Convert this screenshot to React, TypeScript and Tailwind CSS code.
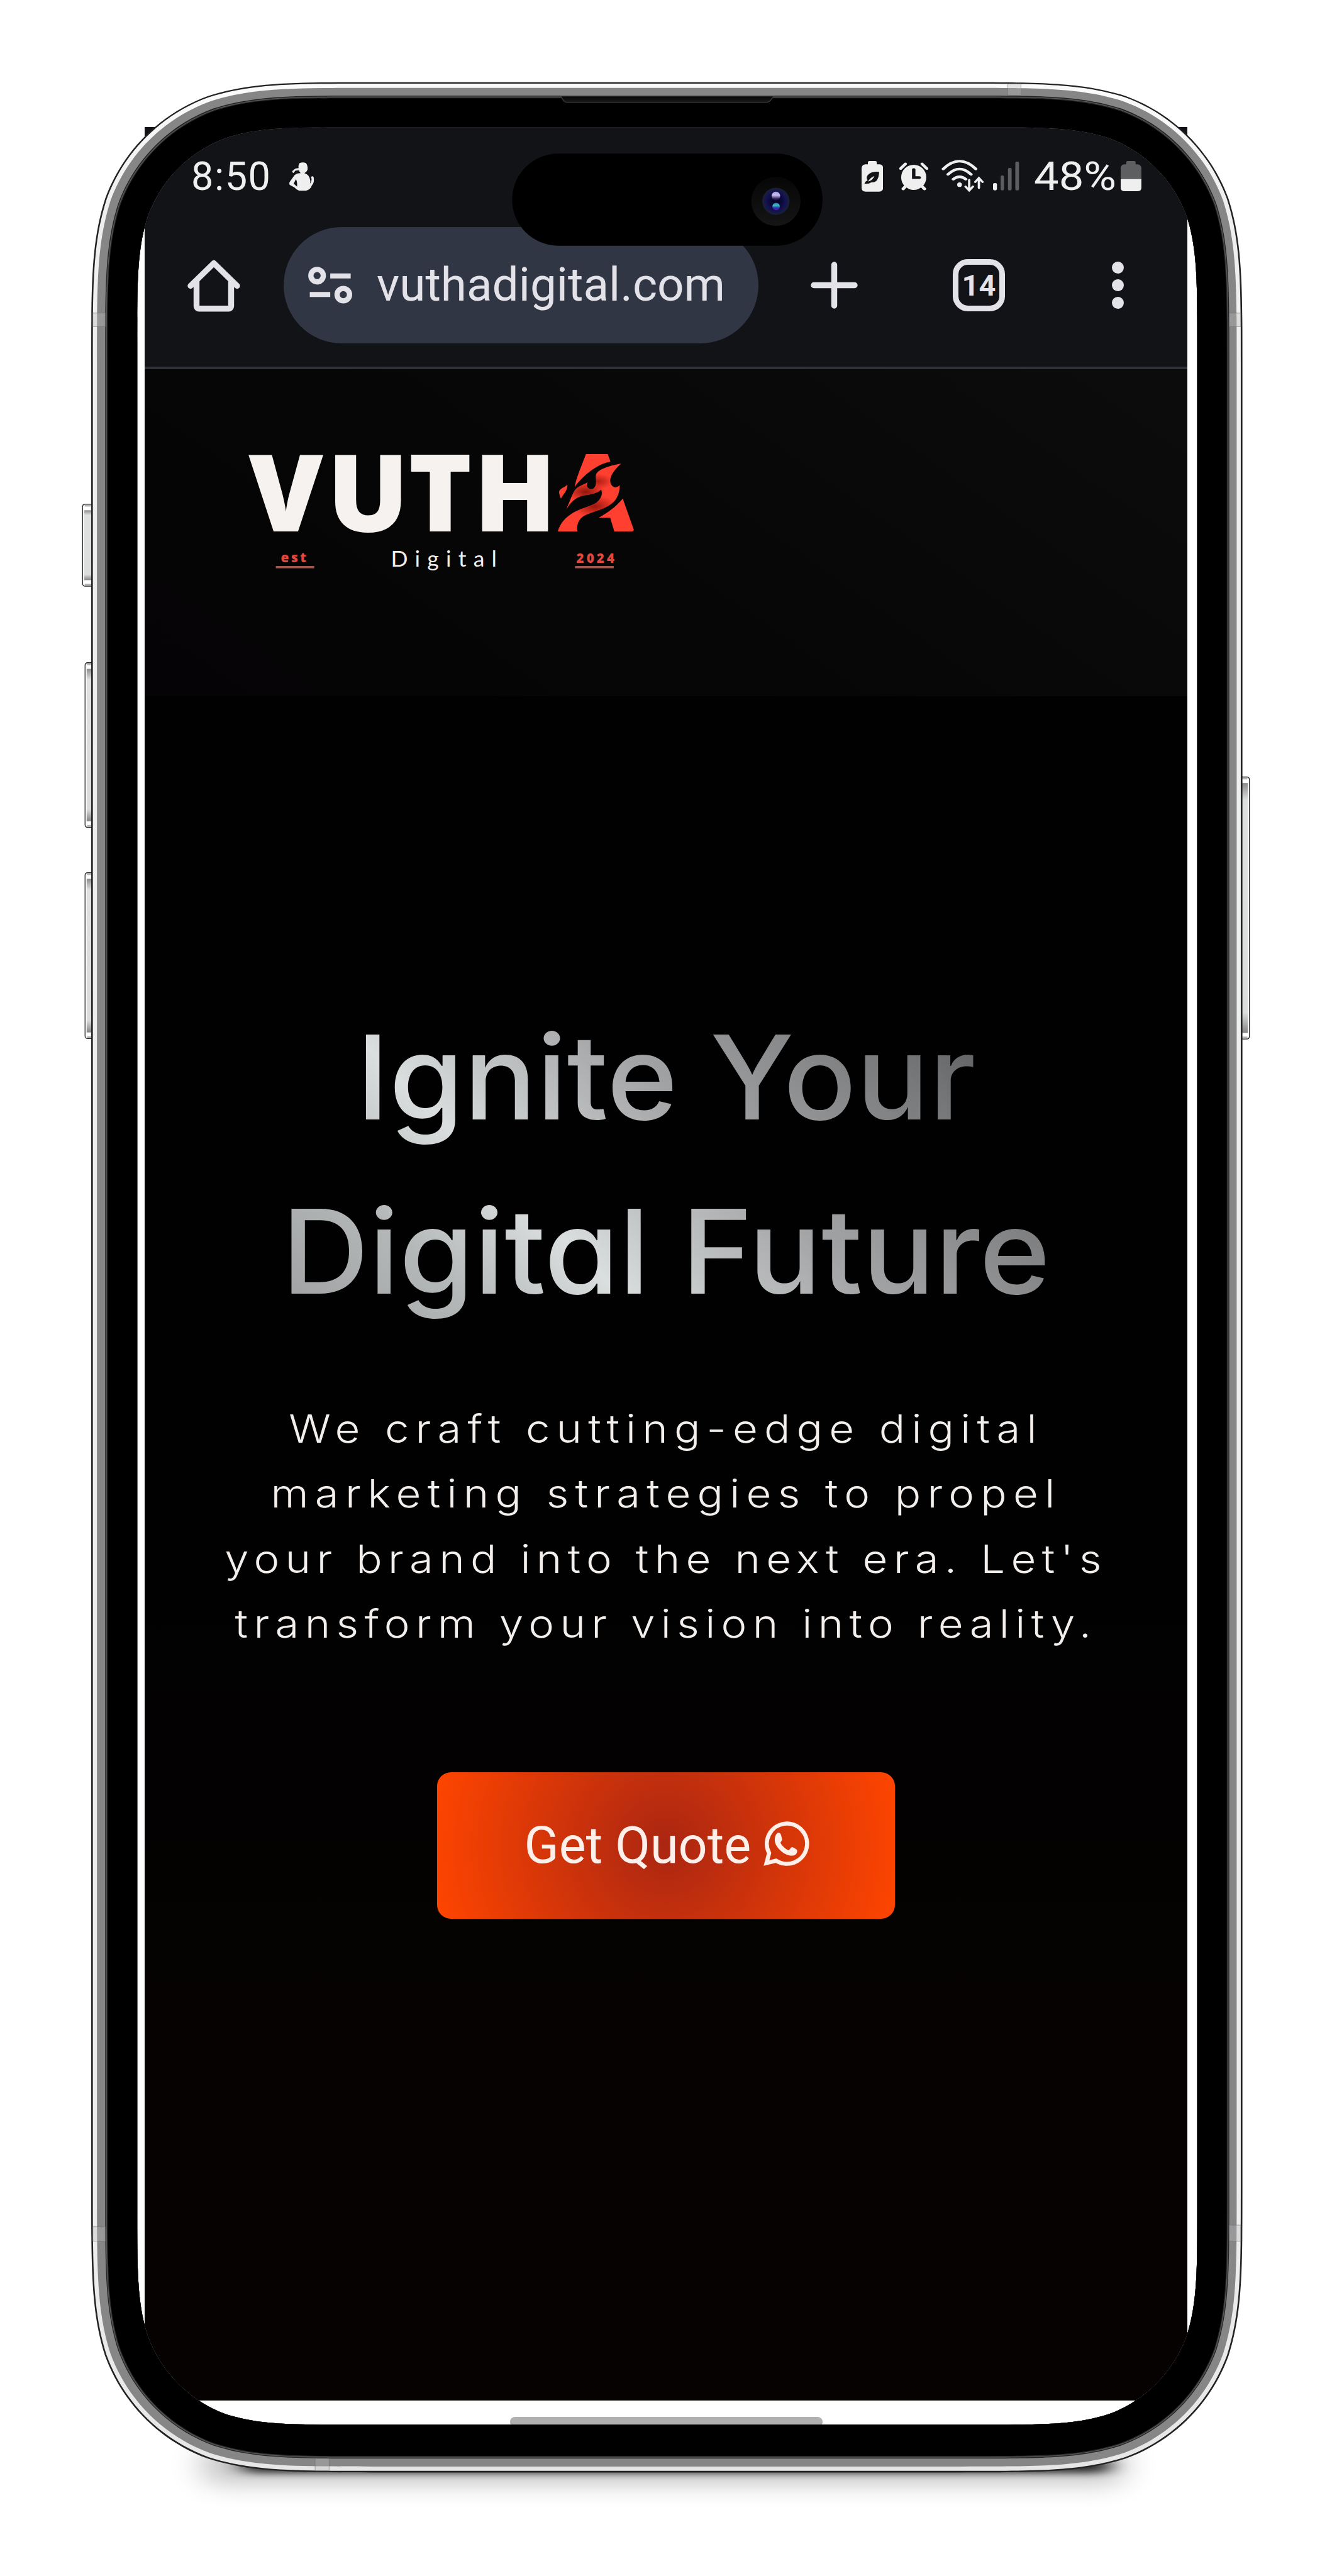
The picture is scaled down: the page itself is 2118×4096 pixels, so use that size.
import type { ReactNode } from "react";

/* Rounded rectangle with continuous-curvature corners. */
function squircle(x0: number, y0: number, x1: number, y1: number, r: number) {
  const a = 1.528665 * r;
  const b = 1.08849296 * r;
  const c = 0.86840694 * r;
  const d = 0.63149379 * r;
  const e = 0.37282383 * r;
  const f = 0.16905956 * r;
  const g = 0.07491139 * r;
  return [
    `M${x0 + a} ${y0}H${x1 - a}`,
    `C${x1 - b} ${y0} ${x1 - c} ${y0} ${x1 - d} ${y0 + g}`,
    `C${x1 - e} ${y0 + f} ${x1 - f} ${y0 + e} ${x1 - g} ${y0 + d}`,
    `C${x1} ${y0 + c} ${x1} ${y0 + b} ${x1} ${y0 + a}`,
    `V${y1 - a}`,
    `C${x1} ${y1 - b} ${x1} ${y1 - c} ${x1 - g} ${y1 - d}`,
    `C${x1 - f} ${y1 - e} ${x1 - e} ${y1 - f} ${x1 - d} ${y1 - g}`,
    `C${x1 - c} ${y1} ${x1 - b} ${y1} ${x1 - a} ${y1}`,
    `H${x0 + a}`,
    `C${x0 + b} ${y1} ${x0 + c} ${y1} ${x0 + d} ${y1 - g}`,
    `C${x0 + e} ${y1 - f} ${x0 + f} ${y1 - e} ${x0 + g} ${y1 - d}`,
    `C${x0} ${y1 - c} ${x0} ${y1 - b} ${x0} ${y1 - a}`,
    `V${y0 + a}`,
    `C${x0} ${y0 + b} ${x0} ${y0 + c} ${x0 + g} ${y0 + d}`,
    `C${x0 + f} ${y0 + e} ${x0 + e} ${y0 + f} ${x0 + d} ${y0 + g}`,
    `C${x0 + c} ${y0} ${x0 + b} ${y0} ${x0 + a} ${y0}Z`,
  ].join("");
}

const SCREEN = squircle(334, 310, 2914, 5902, 342);

const LAYERS = [
  { d: squircle(222, 200, 3024, 6018, 450), fill: "#222324" },
  { d: squircle(226, 203.5, 3020, 6014, 446), fill: "url(#rim)" },
  { d: squircle(236, 214, 3010, 6003.5, 436), fill: "#868686" },
  { d: squircle(256, 232.5, 2992, 5984, 418), fill: "#222324" },
  { d: squircle(258, 235, 2990, 5982, 416), fill: "#58595b" },
  { d: squircle(260, 237, 2988, 5980, 414), fill: "#2b2b2d" },
  { d: squircle(262, 239, 2986, 5978, 412), fill: "#000" },
];

function SideButton({ x, y, w, h, right }: { x: number; y: number; w: number; h: number; right?: boolean }) {
  return (
    <g>
      <rect x={right ? x - 10 : x} y={y} width={w + 10} height={h} rx={7} fill="#262627" />
      <rect x={right ? x - 10 : x + 2} y={y + 2} width={w + 8} height={h - 4} rx={6} fill="#fff" />
      <rect x={right ? x - 10 : x + 6} y={y + 2} width={w + 4} height={5} fill="#777" opacity={0.55} />
      <rect x={right ? x - 10 : x + 6} y={y + h - 7} width={w + 4} height={5} fill="#777" opacity={0.55} />
      <rect x={right ? x - 10 : x + 5} y={y + 16} width={w + 5} height={h - 32} fill="url(#key)" />
    </g>
  );
}

function PhoneFrame() {
  return (
    <svg className="pointer-events-none absolute inset-0 h-full w-full" viewBox="0 0 3242 6270" preserveAspectRatio="none" aria-hidden="true">
      <defs>
        <linearGradient id="rim" x1="0" y1="0" x2="0" y2="1">
          <stop offset="0" stopColor="#fbfbfb" />
          <stop offset="0.05" stopColor="#efefef" />
          <stop offset="0.9" stopColor="#ededed" />
          <stop offset="1" stopColor="#e6e6e6" />
        </linearGradient>
        <linearGradient id="key" x1="0" y1="0" x2="0" y2="1">
          <stop offset="0" stopColor="#8b8c8b" />
          <stop offset="0.07" stopColor="#dfe1e0" />
          <stop offset="0.92" stopColor="#dbdddc" />
          <stop offset="1" stopColor="#858585" />
        </linearGradient>
        <linearGradient id="slot" x1="0" y1="0" x2="0" y2="1">
          <stop offset="0" stopColor="#050505" />
          <stop offset="1" stopColor="#1a1a1a" />
        </linearGradient>
        <linearGradient id="lensRing" x1="0" y1="0" x2="0" y2="1">
          <stop offset="0" stopColor="#060606" />
          <stop offset="1" stopColor="#151515" />
        </linearGradient>
        <radialGradient id="lens">
          <stop offset="0" stopColor="#04041c" />
          <stop offset="0.45" stopColor="#0a0a3c" />
          <stop offset="0.72" stopColor="#141250" />
          <stop offset="1" stopColor="#1b2136" />
        </radialGradient>
        <linearGradient id="glint" x1="0" y1="0" x2="0" y2="1">
          <stop offset="0" stopColor="#a79be0" />
          <stop offset="0.4" stopColor="#c9bdf0" />
          <stop offset="0.85" stopColor="#2a1458" />
        </linearGradient>
        <linearGradient id="glint2" x1="0" y1="0" x2="0" y2="1">
          <stop offset="0" stopColor="#2f7fb8" />
          <stop offset="0.35" stopColor="#35bfc0" />
          <stop offset="0.7" stopColor="#2a30b0" />
          <stop offset="1" stopColor="#6a12a0" />
        </linearGradient>
        <filter id="soft" x="-20%" y="-400%" width="140%" height="900%">
          <feGaussianBlur stdDeviation="40 32" />
        </filter>
        <filter id="tight" x="-20%" y="-400%" width="140%" height="900%">
          <feGaussianBlur stdDeviation="26 9" />
        </filter>
      </defs>

      <rect x="490" y="5960" width="2250" height="80" rx="40" fill="#000" opacity="0.27" filter="url(#soft)" />
      <rect x="590" y="5985" width="2110" height="34" rx="17" fill="#000" opacity="0.78" filter="url(#tight)" />

      <SideButton x={200} y={1226} w={22} h={202} />
      <SideButton x={206} y={1612} w={16} h={403} />
      <SideButton x={206} y={2123} w={16} h={406} />
      <SideButton x={3024} y={1890} w={18} h={640} right />

      {LAYERS.map((l, i) => (
        <path key={i} d={l.d + SCREEN} fill={l.fill} fillRule="evenodd" />
      ))}

      <g fill="#b9b9b9" fillOpacity="0.35" stroke="#6f6f78" strokeOpacity="0.6" strokeWidth="1.5">
        <rect x="226" y="762" width="30" height="33" />
        <rect x="2992" y="762" width="28" height="33" />
        <rect x="226" y="5420" width="30" height="35" />
        <rect x="2992" y="5416" width="28" height="39" />
        <rect x="2453" y="204" width="32" height="28" />
        <rect x="767" y="5984" width="34" height="30" />
      </g>

      <path d="M1365 234C1370 240 1370 249 1380 249H1866C1876 249 1876 240 1884 234Z" fill="url(#slot)" stroke="#3c3c3c" strokeWidth="2" />

      <rect x="1246.500" y="374" width="755.500" height="224" rx="112" fill="#000" />
      <circle cx="1888.500" cy="490" r="60" fill="url(#lensRing)" />
      <circle cx="1888.500" cy="490" r="33" fill="url(#lens)" />
      <circle cx="1888.500" cy="477" r="10.500" fill="url(#glint)" />
      <circle cx="1889" cy="502.500" r="9" fill="url(#glint2)" />
    </svg>
  );
}

function Glyph({ box, className, children }: { box: string; className: string; children: ReactNode }) {
  return (
    <svg viewBox={box} preserveAspectRatio="none" className={className} aria-hidden="true">
      {children}
    </svg>
  );
}

function StatusBar() {
  return (
    <div className="flex h-[156px] items-center pr-[73px] pl-[74px] font-['Roboto',sans-serif] text-[#efefef]">
      <span className="text-[63px] leading-none tracking-[1.500px]">8:50</span>
      <Glyph box="816 445 100 160" className="ml-[28px] h-[53.300px] w-[41.700px]">
        <g fill="#efefef">
          <path d="M858 464Q870 457 882 464Q890 478 888 496Q884 508 876 512Q896 520 898 545Q900 556 897 562Q906 552 902 530Q906 524 911 530Q916 556 904 572Q900 590 882 596H856Q846 592 838 580L820 568Q816 560 822 550L838 522Q848 512 862 512Q856 506 856 498L842 500L834 512Q828 508 830 502L842 490L854 488Q852 472 858 464Z" />
          <path d="M844 540L835 562L848 576Q850 556 844 540Z" fill="#121316" />
        </g>
      </Glyph>

      <div className="ml-auto flex items-center">
        <Glyph box="55 445 82 160" className="h-[53.300px] w-[34.200px]">
          <path d="M79 470V460Q79 454 85 454H107Q113 454 113 460V470H124Q137 472 137 488V582Q137 600 121 600H71Q55 600 55 582V488Q57 472 68 470Z" fill="#efefef" />
          <path d="M122 506Q90 502 77 524Q72 536 78 546Q68 552 66 562Q80 566 92 556Q120 560 122 506ZM104 526Q88 532 80 552Q96 548 104 526Z" fill="#121316" fillRule="evenodd" />
        </Glyph>
        <Glyph box="198 445 110 160" className="ml-[25.400px] h-[53.300px] w-[45.800px]">
          <ellipse cx="253" cy="532" rx="48" ry="60" fill="#efefef" />
          <path d="M203 490L221 468M303 490L285 468" stroke="#efefef" strokeWidth="12" strokeLinecap="round" />
          <path d="M222 574L213 587M284 574L294 587" stroke="#efefef" strokeWidth="13" strokeLinecap="round" />
          <path d="M253 495V533H274" fill="none" stroke="#121316" strokeWidth="13" strokeLinecap="round" />
        </Glyph>
        <Glyph box="360 445 163 160" className="ml-[21.700px] h-[53.300px] w-[67.900px]">
          <g fill="none" stroke="#efefef" strokeWidth="12" strokeLinecap="round">
            <path d="M367 492Q429 418 491 492" />
            <path d="M385 518Q429 466 473 518" />
            <path d="M405 541Q429 518 453 541" />
          </g>
          <ellipse cx="429" cy="567" rx="9" ry="11" fill="#efefef" />
          <path d="M466 544V594M452 576L466 595L480 576M503 582V538M489 554L503 535L517 554" fill="none" stroke="#efefef" strokeWidth="9" strokeLinecap="round" />
        </Glyph>
        <Glyph box="557 445 100 160" className="ml-[14.200px] h-[53.300px] w-[41.700px]">
          <rect x="557" y="559" width="15" height="35" rx="7" fill="#efefef" />
          <g fill="#5c5d5f">
            <rect x="586" y="523" width="13" height="71" rx="6" />
            <rect x="614" y="487" width="14" height="107" rx="6" />
            <rect x="642" y="457" width="14" height="137" rx="6" />
          </g>
        </Glyph>
        <span className="ml-[23px] w-[128px] text-[63px] leading-none">
          <span className="inline-block origin-left scale-x-[1.12]">48%</span>
        </span>
        <Glyph box="1047 445 79 160" className="ml-[10px] h-[53.300px] w-[32.900px]">
          <path d="M1068 470V460Q1068 454 1074 454H1098Q1104 454 1104 460V470H1112Q1126 474 1126 488V541H1047V488Q1047 474 1060 470Z" fill="#5e5f61" />
          <path d="M1047 540H1126V582Q1126 598 1110 598H1063Q1047 598 1047 582Z" fill="#efefef" />
        </Glyph>
      </div>
    </div>
  );
}

function Toolbar() {
  return (
    <div className="mb-[34px] flex h-[191px] items-center pl-[68.400px] font-['Roboto',sans-serif] text-[#e3e2e8]">
      <svg viewBox="0 0 84 84" className="h-[84px] w-[84px] shrink-0" fill="none" stroke="currentColor" strokeWidth="9.400" aria-hidden="true">
        <path d="M5 42.500L42 6.500L79 42.500" strokeLinecap="round" strokeLinejoin="round" />
        <path d="M14.500 34V74.800a4 4 0 0 0 4 4H65.500a4 4 0 0 0 4-4V34" />
      </svg>
      <div className="ml-[68.600px] flex h-[184.400px] w-[755px] shrink-0 items-center rounded-full bg-[#313645] pl-[38.600px]">
        <svg viewBox="0 0 70 59" className="h-[59px] w-[70px] shrink-0" fill="none" stroke="currentColor" strokeWidth="8.400" aria-hidden="true">
          <circle cx="14.200" cy="14.300" r="9.900" />
          <circle cx="55.900" cy="44.500" r="9.900" />
          <path d="M35.100 14.800H67.600M2.600 44.300H35.100" strokeWidth="8" />
        </svg>
        <span className="ml-[39.500px] text-[74.700px] leading-none">vuthadigital.com</span>
      </div>
      <svg viewBox="0 0 75 75" className="ml-[83px] h-[75px] w-[75px] shrink-0" fill="none" stroke="currentColor" strokeWidth="9.400" strokeLinecap="round" aria-hidden="true">
        <path d="M37.500 5V70M5 37.500H70" />
      </svg>
      <div className="ml-[151px] flex h-[83px] w-[83px] shrink-0 items-center justify-center rounded-[24px] border-[9.400px] border-[#e3e2e8]">
        <span className="text-[47px] leading-none font-bold">14</span>
      </div>
      <div className="ml-[170px] flex shrink-0 flex-col gap-[8.600px]">
        <span className="h-[19px] w-[19px] rounded-full bg-[#e3e2e8]" />
        <span className="h-[19px] w-[19px] rounded-full bg-[#e3e2e8]" />
        <span className="h-[19px] w-[19px] rounded-full bg-[#e3e2e8]" />
      </div>
    </div>
  );
}

function Logo() {
  return (
    <svg viewBox="0 0 640 230" className="h-[230px] w-[640px] overflow-visible" aria-label="Vutha Digital">
      <defs>
        <radialGradient id="shade1" gradientUnits="userSpaceOnUse" cx="1305" cy="412" r="70">
          <stop offset="0" stopColor="#8f150b" />
          <stop offset="1" stopColor="#8f150b" stopOpacity="0" />
        </radialGradient>
        <radialGradient id="shade2" gradientUnits="userSpaceOnUse" cx="1338" cy="518" r="80">
          <stop offset="0" stopColor="#9a160c" />
          <stop offset="1" stopColor="#9a160c" stopOpacity="0" />
        </radialGradient>
        <radialGradient id="shade3" gradientUnits="userSpaceOnUse" cx="1350" cy="335" r="56">
          <stop offset="0" stopColor="#a81a10" stopOpacity="0.9" />
          <stop offset="1" stopColor="#a81a10" stopOpacity="0" />
        </radialGradient>
        <path
          id="flame"
          d="M1435 205C1410 212 1365 235 1350 265C1335 290 1347 320 1342 360C1338 385 1328 397 1320 390C1308 378 1308 360 1312 342C1295 360 1270 375 1262 410C1252 445 1245 490 1234 538C1250 490 1265 450 1300 437C1325 430 1345 425 1362 395C1368 430 1362 460 1345 490C1325 515 1290 530 1262 560C1235 590 1210 640 1203 700L1275 700C1272 660 1275 615 1300 585C1325 560 1370 540 1395 505C1420 475 1430 420 1430 362C1420 385 1405 385 1398 355C1388 310 1405 260 1435 205Z"
        />
      </defs>
      <text x="15.300 140.500 269.500 373.500" y="145" fill="#f5f2ef" fontSize="171" fontWeight="800" fontFamily="'Open Sans', sans-serif">
        VUTH
      </text>
      <g transform="matrix(0.4333 0 0 0.21777 -14.2 -7.5)" fill="#ff3f30">
        <path d="M1306 135H1386L1396 190C1350 205 1295 290 1265 375C1267 340 1275 300 1280 270Z" />
        <path d="M1238 358C1232 375 1212 385 1208 405C1206 425 1211 440 1214 462C1222 430 1240 400 1238 358Z" />
        <use href="#flame" />
        <use href="#flame" fill="url(#shade1)" />
        <use href="#flame" fill="url(#shade2)" />
        <use href="#flame" fill="url(#shade3)" />
        <path d="M1441 460L1482 690Q1480 700 1474 700H1410L1395 600H1352C1380 570 1415 525 1441 460Z" />
      </g>
      <g fill="#e2483c" fontFamily="'Open Sans', sans-serif" fontWeight="800">
        <text x="66.500" y="194" fontSize="21" textLength="40.500" lengthAdjust="spacing">
          est
        </text>
        <text x="536.500" y="195" fontSize="20.500" textLength="60.500" lengthAdjust="spacing">
          2024
        </text>
      </g>
      <rect x="58.600" y="200" width="61" height="3.600" fill="#a35650" />
      <rect x="534.300" y="200" width="61.600" height="3.600" fill="#a35650" />
      <text x="241.500" y="200.500" fill="#f0eeec" fontSize="35.500" textLength="168.500" lengthAdjust="spacing" fontFamily="Lato, sans-serif">
        Digital
      </text>
    </svg>
  );
}

function WhatsAppIcon() {
  return (
    <svg viewBox="0 0 72 72" className="mb-[6px] ml-[20px] h-[72px] w-[72px] shrink-0 overflow-visible" aria-hidden="true">
      <path d="M4.800 67.300L9 51.500A32 32 0 1 1 20 63.500Z" fill="none" stroke="#fdf0eb" strokeWidth="6.500" />
      <path
        d="M23 19c3-.3 4 1 5 4l1.500 6c.7 2-2 4.500-2.500 6c1.500 4 7.500 9.500 12.500 12c1.500 .5 4-5 6-5c2 .2 7 3.500 8 5c.8 4-2 8-6.500 8.500c-8 1-16-4-21-9c-5-5-8.500-11-8-17c.2-4 1.500-8.500 5-10.500z"
        fill="#fdf0eb"
      />
    </svg>
  );
}

function Hero() {
  return (
    <main className="flex h-[2710.300px] flex-col items-center bg-[linear-gradient(180deg,#010101_0%,#010101_35%,#030101_60%,#060202_85%,#060202_100%)] pt-[468.400px]">
      <h1 className="w-full scale-x-[1.032] bg-[linear-gradient(45deg,#8b8d8f_0%,#a4a6a8_16%,#b4b7b8_26%,#dbdedf_37.5%,#c4c7c8_44%,#a3a4a6_55%,#929395_63%,#77797b_73%,#5e6062_81%,#8a8c8e_100%)] bg-clip-text text-center font-['Inter',sans-serif] text-[186px] leading-[276.400px] font-medium text-transparent [font-feature-settings:'cv11']">
        <span className="block whitespace-nowrap">Ignite Your</span>
        <span className="block whitespace-nowrap">Digital Future</span>
      </h1>
      <p className="mt-[91.800px] w-[1400px] scale-x-[1.12] text-center font-['Inter',sans-serif] text-[61.500px] leading-[103.400px] font-light whitespace-nowrap text-[#f3efec]">
        <span className="block tracking-[9.050px]">We craft cutting-edge digital</span>
        <span className="block tracking-[9.110px]">marketing strategies to propel</span>
        <span className="block tracking-[8.310px]">your brand into the next era. Let's</span>
        <span className="block tracking-[8.340px]">transform your vision into reality.</span>
      </p>
      <button className="mt-[184px] flex h-[233.700px] w-[728px] items-center rounded-[22px] bg-[radial-gradient(circle,#aa2612,#ff4500)] pl-[138.500px] font-['Roboto',sans-serif] text-[81px] leading-none text-[#fdf0eb]">
        <span className="whitespace-nowrap">Get Quote</span>
        <WhatsAppIcon />
      </button>
    </main>
  );
}

export default function App() {
  return (
    <div className="relative h-[4096px] w-[2118px] overflow-hidden bg-white">
      <div className="mr-auto ml-[230px] w-[1658px] pt-[202px]">
        <div className="border-b-[4px] border-[#303136] bg-[#121316]">
          <StatusBar />
          <Toolbar />
        </div>
        <header className="h-[520px] bg-[linear-gradient(35deg,#050305_0%,#060606_40%,#0c0c0c_100%)] pt-[113px] pl-[150px]">
          <Logo />
        </header>
        <Hero />
        <div className="flex justify-center bg-white pt-[26px]">
          <div className="h-[16px] w-[497px] rounded-[8px] bg-[#b0b0b0]" />
        </div>
      </div>
      <PhoneFrame />
    </div>
  );
}
